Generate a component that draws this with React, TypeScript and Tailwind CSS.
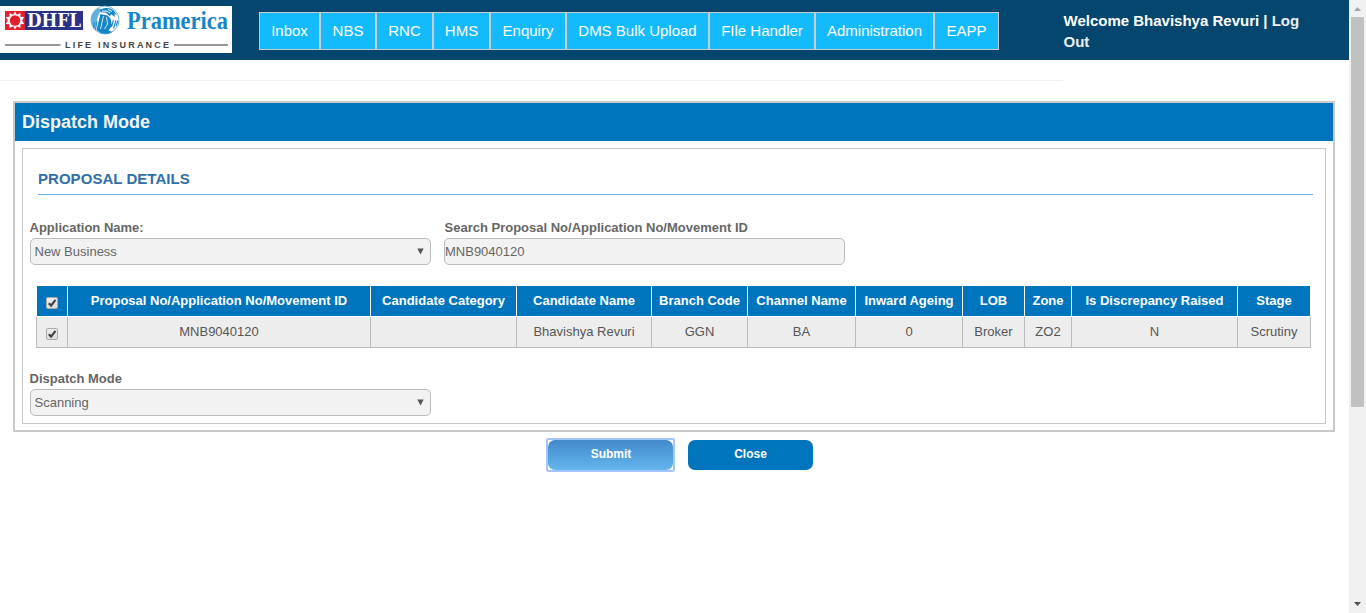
import React from "react";

const NAV = [
  { label: "Inbox", width: "w-[61px]" },
  { label: "NBS", width: "w-[56px]" },
  { label: "RNC", width: "w-[57px]" },
  { label: "HMS", width: "w-[57px]" },
  { label: "Enquiry", width: "w-[76px]" },
  { label: "DMS Bulk Upload", width: "w-[143px]" },
  { label: "FIle Handler", width: "w-[106px]" },
  { label: "Administration", width: "w-[119px]" },
  { label: "EAPP", width: "w-[65px]" },
];

const COLUMNS = [
  { title: "Proposal No/Application No/Movement ID", value: "MNB9040120" },
  { title: "Candidate Category", value: "" },
  { title: "Candidate Name", value: "Bhavishya Revuri" },
  { title: "Branch Code", value: "GGN" },
  { title: "Channel Name", value: "BA" },
  { title: "Inward Ageing", value: "0" },
  { title: "LOB", value: "Broker" },
  { title: "Zone", value: "ZO2" },
  { title: "Is Discrepancy Raised", value: "N" },
  { title: "Stage", value: "Scrutiny" },
];

const GRID =
  "grid grid-cols-[31px_303px_146px_135px_96px_108px_107px_62px_47px_166px_73px]";

function Logo() {
  return (
    <svg width="232" height="47" viewBox="0 6 232 47" className="block overflow-visible bg-white">
      <rect x="5" y="11" width="20" height="19" fill="#e31e2d" />
      <path
        d="M15 11.5l1.9 3.2 3.5-1.8.1 3.8 3.6.4-1.9 3.4 1.9 3.4-3.6.4-.1 3.8-3.5-1.8L15 29.5l-1.9-3.2-3.5 1.8-.1-3.8-3.6-.4 1.9-3.4-1.9-3.4 3.6-.4.1-3.8 3.5 1.8z"
        fill="#fff"
      />
      <circle cx="15" cy="20.5" r="5.2" fill="#e31e2d" />
      <rect x="25" y="11" width="58" height="19" fill="#2b3088" />
      <text x="27" y="27.3" textLength="54" lengthAdjust="spacingAndGlyphs" fontFamily="DejaVu Serif, serif" fontWeight="700" fontSize="18.5" fill="#fff">DHFL</text>
      <circle cx="105" cy="20" r="14" fill="#fff" stroke="#4aa5d8" strokeWidth="0.8" />
      <path d="M98 8.2C93 11 91 15.500 91.200 20.500c.3 3.500 1.500 6.500 4 9l1.300-7.500L98 16l2-4 4-2.500z" fill="#5fb2dd" />
      <path d="M100 10c4-3 10-2.500 13.500.2L117 15l-3-1.300 1.500 3.500-4.500-3-1 2-4-3.500-5-.5z" fill="#1686c9" />
      <path d="M102 11l5 .2 3 1.800M108 9.500l4 2" stroke="#fff" strokeWidth="1" fill="none" />
      <path d="M100.500 14l-2.500 10-1.500 6 4.500 3.300 6 .7 5.500-2-4-1.500 3.500-5-1.500-7-3-3z" fill="#1686c9" />
      <path d="M103.500 16l-3 13M106.500 17l1 7-3 5" stroke="#fff" strokeWidth="0.8" fill="none" />
      <path d="M94.500 22l-1 6M97 21l-1.500 9M113.500 20l-2 7M116 20.500l-2.500 8M118 20.500l-2 5.500" stroke="#1686c9" strokeWidth="1.1" fill="none" />
      <text x="127" y="29" textLength="101" lengthAdjust="spacingAndGlyphs" fontFamily="Liberation Serif, serif" fontWeight="700" fontSize="25" fill="#1686c9">Pramerica</text>
      <path d="M5 45h55.500M174 45h54" stroke="#777" strokeWidth="1.300" />
      <text x="65" y="48.300" textLength="104" fontFamily="Liberation Sans, sans-serif" fontWeight="700" fontSize="9" fill="#444">LIFE INSURANCE</text>
    </svg>
  );
}

function Check() {
  return (
    <svg width="12" height="13" viewBox="0 0 12 13" className="mt-[10px] shrink-0">
      <defs>
        <linearGradient id="box" x1="0" y1="0" x2="0" y2="1">
          <stop offset="0" stopColor="#eee" />
          <stop offset="1" stopColor="#dcdcdc" />
        </linearGradient>
      </defs>
      <rect x="0.5" y="1.5" width="11" height="11" rx="1.5" fill="url(#box)" stroke="#aaa" />
      <path d="M2.800 7.200l2.300 2.400L9.500 3.800" fill="none" stroke="#404040" strokeWidth="2.200" />
    </svg>
  );
}

function SelectBox({ value }: { value: string }) {
  return (
    <div className="flex h-[27px] w-[401px] items-center justify-between rounded-[5px] border border-[#bbb] bg-[#f2f2f2] pl-[3.5px] pr-[6px] text-[13px] text-[#666]">
      <span>{value}</span>
      <svg width="7" height="7" viewBox="0 0 7 7" className="-mt-px">
        <path d="M0.3 0.5h6.4L3.5 6.5z" fill="#555" />
      </svg>
    </div>
  );
}

export default function App() {
  return (
    <div className="flex h-[613px] w-[1366px] overflow-hidden bg-white font-['Liberation_Sans',Arial,sans-serif]">
      <main className="w-[1349px]">
        <header className="flex h-[60px] bg-[#05466f]">
          <div className="w-[259px] pt-[6px]">
            <Logo />
          </div>
          <nav className="mt-3 flex h-[38px] w-[804px] text-[15px] text-white">
            {NAV.map((item) => (
              <a
                key={item.label}
                className={`${item.width} flex items-center justify-center whitespace-nowrap border border-[#ccc] bg-[#14bbfc]`}
              >
                {item.label}
              </a>
            ))}
          </nav>
          <div className="mt-[10px] w-[260px] pl-[0.5px] text-[15px] font-bold leading-[21px] text-white">
            <div className="whitespace-nowrap">
              Welcome Bhavishya Revuri | <a className="text-[#eee]">Log</a>
            </div>
            <a className="block text-[#eee]">Out</a>
          </div>
        </header>
        <div className="mt-5 h-px w-[1063px] bg-[#eee]" />
        <section className="ml-[13px] mt-5 h-[331px] w-[1322px] border-2 border-[#c9c9c9]">
          <h1 className="flex h-[38px] items-center bg-[#0075be] pl-[7px] text-[18px] font-bold text-[#f5f5f5]">
            Dispatch Mode
          </h1>
          <div className="ml-[7px] mt-[7px] h-[276px] w-[1304px] border border-[#c9c9c9]">
            <h2 className="ml-[15px] mt-[19px] h-[27px] w-[1275px] border-b border-[#69b1e7] text-[15px] font-bold leading-[22px] tracking-[0.04px] text-[#326fa9]">
              PROPOSAL DETAILS
            </h2>
            <div className="ml-[7px] mt-[25px] flex gap-[13px] text-[13px] text-[#666]">
              <div>
                <label className="-ml-[0.5px] block h-[18px] font-bold leading-[15px]">Application Name:</label>
                <SelectBox value="New Business" />
              </div>
              <div>
                <label className="block h-[18px] pl-[0.5px] font-bold leading-[15px]">
                  Search Proposal No/Application No/Movement ID
                </label>
                <div className="flex h-[27px] w-[401px] items-center rounded-[5px] border border-[#bbb] bg-[#f2f2f2]">
                  MNB9040120
                </div>
              </div>
            </div>
            <div className="ml-[13px] mt-[21px] w-[1275px] text-center text-[13px]">
              <div className={`${GRID} ml-px h-[30px] font-bold leading-[29px] text-white`}>
                <div className="flex justify-center border-r border-white bg-[#0075be]">
                  <Check />
                </div>
                {COLUMNS.map((c) => (
                  <div key={c.title} className="whitespace-nowrap border-r border-white bg-[#0075be]">
                    {c.title}
                  </div>
                ))}
              </div>
              <div className={`${GRID} mt-px h-[31px] border-b border-l border-[#bbb] bg-[#ededed] leading-[29px] text-[#555]`}>
                <div className="flex justify-center border-r border-[#bbb]">
                  <Check />
                </div>
                {COLUMNS.map((c) => (
                  <div key={c.title} className="whitespace-nowrap border-r border-[#bbb]">
                    {c.value}
                  </div>
                ))}
              </div>
            </div>
            <div className="ml-[7px] mt-[23px] text-[13px] text-[#666]">
              <label className="-ml-[0.5px] block h-[18px] font-bold leading-[15px]">Dispatch Mode</label>
              <SelectBox value="Scanning" />
            </div>
          </div>
        </section>
        <div className="ml-[546px] mt-[6px] flex items-center gap-[13px] text-[12px] font-bold text-white">
          <div className="h-[34px] w-[129px] rounded-[2px] border-2 border-[#a3c5fb]">
            <button className="block h-[30px] w-[125px] rounded-[7px] bg-linear-to-b from-[#428acb] to-[#65b5ee] pb-[2px] pl-px">
              Submit
            </button>
          </div>
          <button className="block h-[30px] w-[125px] rounded-[7px] bg-[#0075be] pb-[2px]">Close</button>
        </div>
      </main>
      <aside className="flex w-[17px] flex-col items-center bg-[#f1f1f1]">
        <svg width="17" height="17" viewBox="0 0 17 17" className="shrink-0">
          <path d="M5 11h7L8.5 7z" fill="#a3a3a3" />
        </svg>
        <div className="h-[390px] w-[13px] bg-[#c1c1c1]" />
        <svg width="17" height="17" viewBox="0 0 17 17" className="mt-auto shrink-0">
          <path d="M5 6h7L8.5 10z" fill="#505050" />
        </svg>
      </aside>
    </div>
  );
}
